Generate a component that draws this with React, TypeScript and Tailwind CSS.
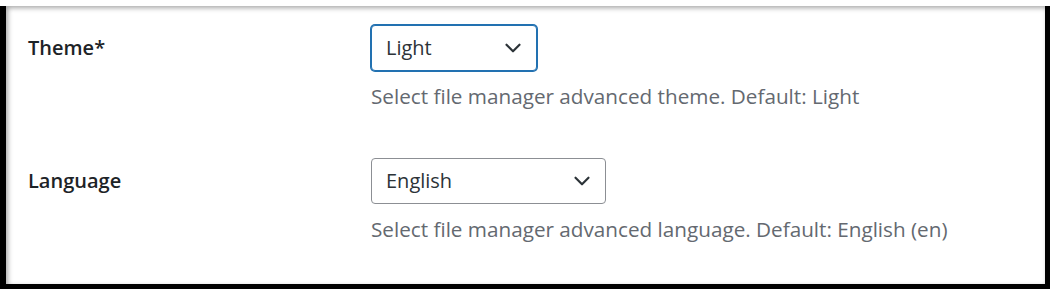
import { ChevronDown } from 'lucide-react';

const FONT = { fontFamily: '"Open Sans", "Noto Sans", sans-serif' };

function Select({ value, width, focused }: { value: string; width: string; focused?: boolean }) {
  return (
    <div
      className={
        'relative flex h-[46px] items-center rounded-[4px] border bg-white pl-[14px] text-[20px] text-[#2c3338] ' +
        width +
        (focused ? ' border-[#2271b1] ring-1 ring-[#2271b1]' : ' border-[#8c8f94]')
      }
    >
      <span>{value}</span>
      <ChevronDown className="absolute right-[10px] top-1/2 h-[26px] w-[26px] -translate-y-1/2 text-[#2c3338]" strokeWidth={2} />
    </div>
  );
}

function Row({
  label,
  value,
  width,
  focused,
  help,
}: {
  label: string;
  value: string;
  width: string;
  focused?: boolean;
  help: string;
}) {
  return (
    <div className="flex">
      <div className="flex h-[46px] w-[343px] shrink-0 items-center text-[20px] font-semibold text-[#1d2327]">{label}</div>
      <div className="flex flex-col">
        <Select value={value} width={width} focused={focused} />
        <p className="mt-[13px] text-[20.7px] leading-[24px] text-[#646970]">{help}</p>
      </div>
    </div>
  );
}

export default function App() {
  return (
    <div style={FONT} className="h-[289px] w-[1050px] bg-black">
      <div className="ml-[6px] mt-[6px] h-[278px] w-[1039px] bg-white shadow-[inset_2px_2px_5px_rgba(0,0,0,0.35)]">
        <div className="flex flex-col gap-[50px] pl-[22px] pt-[19px]">
          <Row
            label="Theme*"
            value="Light"
            width="w-[166px]"
            focused
            help="Select file manager advanced theme. Default: Light"
          />
          <Row
            label="Language"
            value="English"
            width="w-[235px]"
            help="Select file manager advanced language. Default: English (en)"
          />
        </div>
      </div>
    </div>
  );
}
